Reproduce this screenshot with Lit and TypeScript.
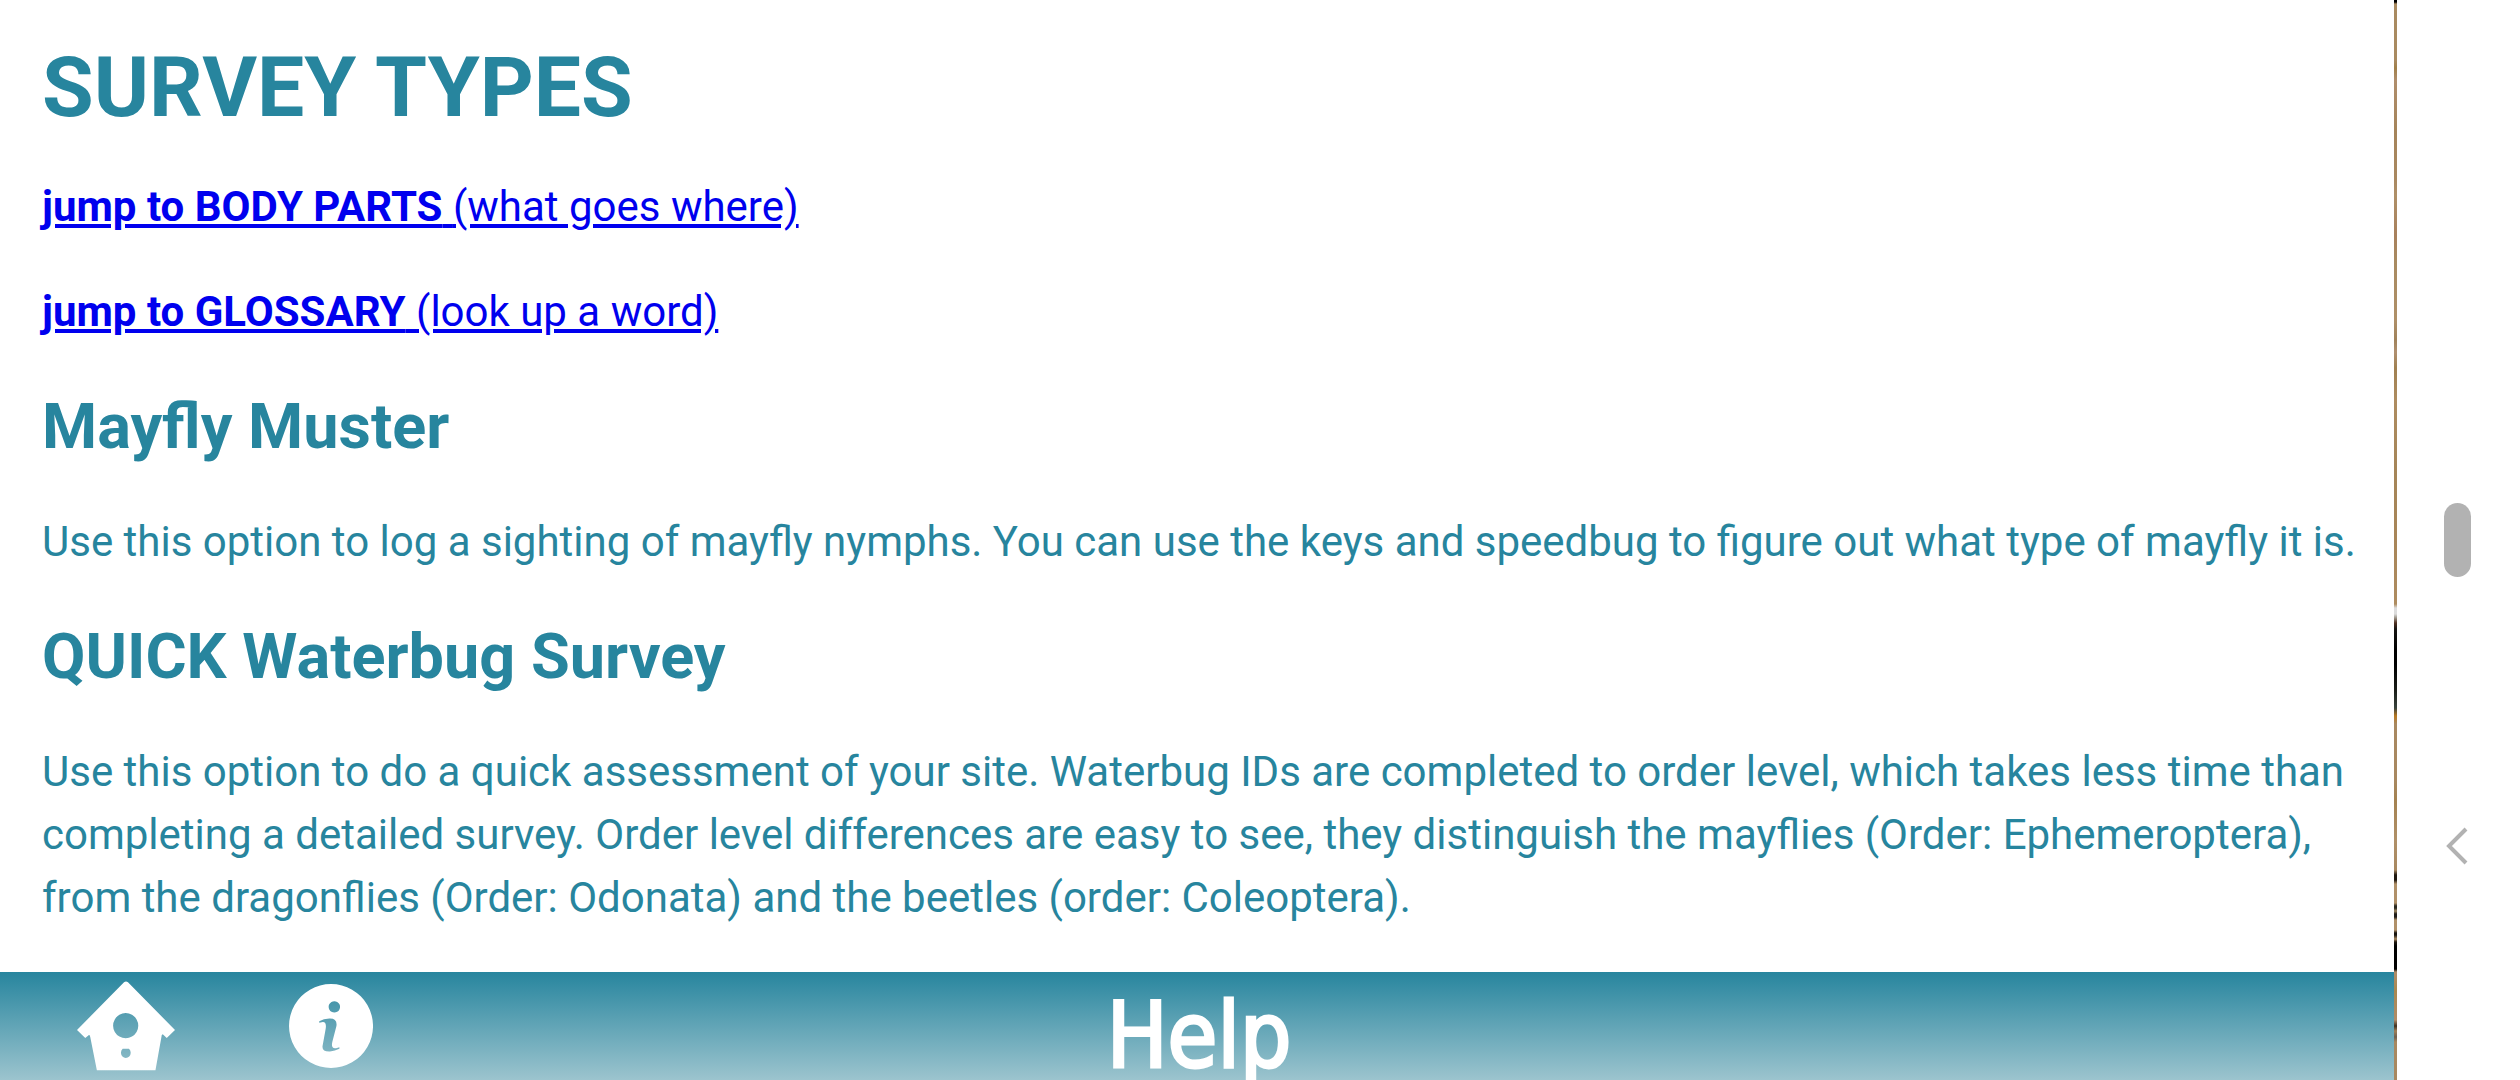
import { LitElement, html, css } from "lit";
import { customElement } from "lit/decorators.js";

interface Survey {
  title: string;
  text: string;
}

const JUMPS = [
  { href: "#body-parts", label: "jump to BODY PARTS", hint: "(what goes where)" },
  { href: "#glossary", label: "jump to GLOSSARY", hint: "(look up a word)" },
];

const SURVEYS: Survey[] = [
  {
    title: "Mayfly Muster",
    text: "Use this option to log a sighting of mayfly nymphs. You can use the keys and speedbug to figure out what type of mayfly it is.",
  },
  {
    title: "QUICK Waterbug Survey",
    text: "Use this option to do a quick assessment of your site. Waterbug IDs are completed to order level, which takes less time than completing a detailed survey. Order level differences are easy to see, they distinguish the mayflies (Order: Ephemeroptera), from the dragonflies (Order: Odonata) and the beetles (order: Coleoptera).",
  },
];

@customElement("help-article")
class HelpArticle extends LitElement {
  static styles = css`
    :host {
      display: block;
      padding: 37px 36px 36px 42px;
      color: #27859e;
      font: 42px/63px Roboto, "Liberation Sans", sans-serif;
    }
    .title {
      margin: 0 0 37px;
      font-size: 84px;
      line-height: 101px;
    }
    .jump {
      margin: 0 0 42px;
    }
    .link {
      color: #0000ee;
    }
    .heading {
      margin: 46px 0 45px;
      font-size: 63px;
      line-height: 76px;
    }
    .text {
      margin: 0;
    }
  `;

  render() {
    return html`
      <h1 class="title">SURVEY TYPES</h1>
      ${JUMPS.map(
        (j) => html`<p class="jump"><a class="link" href=${j.href}><b>${j.label} </b>${j.hint}</a></p>`
      )}
      ${SURVEYS.map(
        (s) => html`<section>
          <h2 class="heading">${s.title}</h2>
          <p class="text">${s.text}</p>
        </section>`
      )}
    `;
  }
}

@customElement("help-footer")
class HelpFooter extends LitElement {
  static styles = css`
    :host {
      display: grid;
      grid-template-columns: 1fr auto 1fr;
      height: 108px;
      overflow: hidden;
      background: linear-gradient(#27859e, #9cc4ce);
      color: #fff;
    }
    .tools {
      display: flex;
      align-items: flex-start;
      gap: 114px;
      padding: 9px 0 0 77px;
    }
    .tool {
      display: block;
      color: inherit;
    }
    .icon {
      display: block;
      fill: currentColor;
    }
    .info {
      margin-top: 3px;
    }
    .title {
      margin: 0;
      padding-left: 4px;
      font: 90px/128px "DejaVu Sans Condensed", "DejaVu Sans", sans-serif;
      -webkit-text-stroke: 3px #fff;
    }
  `;

  render() {
    return html`
      <nav class="tools" aria-label="Tools">
        <a class="tool" href="#home" aria-label="Home">
          <svg class="icon" width="98" height="90" viewBox="0 0 296 270" aria-hidden="true">
            <path
              fill-rule="evenodd"
              d="M142 3Q148-2 154 3L296 147L271 171L259 160Q255 161 255 168L237 269H60L40 168Q39 161 36 162L25 171L0 147ZM147 96a38 38 0 1 0 .1 0ZM138 204H157Q163 210 162 217A14 14 0 0 1 133 217Q132 210 138 204Z"
            />
          </svg>
        </a>
        <a class="tool info" href="#about" aria-label="About">
          <svg class="icon" width="84" height="84" viewBox="0 0 250 250" aria-hidden="true">
            <path
              fill-rule="evenodd"
              d="M125 0a125 125 0 1 0 .1 0ZM135 51a17 17 0 1 1-.1 0ZM90 111Q103 103 120 103Q145 102 141 126L129 172Q124 194 140 191L150 188V193Q137 200 122 201Q97 202 100 184L108 140Q114 113 101 113L90 115Z"
            />
          </svg>
        </a>
      </nav>
      <h2 class="title">Help</h2>
    `;
  }
}

@customElement("system-bar")
class SystemBar extends LitElement {
  static styles = css`
    :host {
      display: grid;
      grid-template-rows: 1fr auto 1fr;
      justify-items: center;
      box-sizing: border-box;
      width: 123px;
      padding-right: 3px;
      background: #fff;
    }
    .button {
      display: block;
      padding: 0;
      border: 0;
      background: none;
      cursor: pointer;
    }
    .home {
      grid-row: 2;
      width: 27px;
      height: 74px;
      border-radius: 14px;
      background: #b2b2b2;
    }
    .back {
      grid-row: 3;
      padding-top: 34px;
    }
    .chevron {
      display: block;
      fill: none;
      stroke: #b2b2b2;
      stroke-width: 4;
    }
  `;

  render() {
    return html`
      <button class="button home" aria-label="Home screen"></button>
      <button class="button back" aria-label="Back">
        <svg class="chevron" width="22" height="38" viewBox="0 0 22 38" aria-hidden="true">
          <path d="M20 2L3 19L20 36" />
        </svg>
      </button>
    `;
  }
}

@customElement("app-root")
class AppRoot extends LitElement {
  static styles = css`
    :host {
      display: flex;
      min-height: 100vh;
      background: #fff;
    }
    .page {
      display: flex;
      flex: 1;
      flex-direction: column;
      min-width: 0;
    }
    .article {
      flex: 1;
    }
    .edge {
      width: 3px;
      background: linear-gradient(
        #000 0 2px,
        #a98a60 4px 60px,
        #a07f48 68px,
        #b08e6c 80px,
        #a5845a 130px,
        #a98860 180px,
        #af9068 195px,
        #a8805c 235px,
        #a88a60 260px,
        #af9068 320px,
        #a0825a 340px,
        #b09070 352px,
        #a08050 368px,
        #ae8c60 400px,
        #a58558 470px,
        #a88558 540px,
        #ae8c60 604px,
        #ddd 608px 614px,
        #a9a49a 617px,
        #503020 623px,
        #161412 629px,
        #000 650px 664px,
        #1a1d18 690px,
        #38423c 708px,
        #b87820 716px,
        #a88860 724px 780px,
        #a48250 800px,
        #b09068 840px,
        #a88860 870px,
        #201810 875px 880px,
        #b09068 884px 903px,
        #2a2820 906px 908px,
        #a08860 911px,
        #201c18 914px 917px,
        #b09068 920px 930px,
        #181410 933px 935px,
        #a88860 939px,
        #201810 942px,
        #000 946px 969px,
        #b08c68 972px,
        #a88850 990px,
        #b08c68 1020px,
        #403020 1026px,
        #a08058 1031px,
        #706050 1037px,
        #a88860 1042px
      );
    }
  `;

  render() {
    return html`
      <main class="page">
        <help-article class="article"></help-article>
        <help-footer></help-footer>
      </main>
      <div class="edge"></div>
      <system-bar></system-bar>
    `;
  }
}
